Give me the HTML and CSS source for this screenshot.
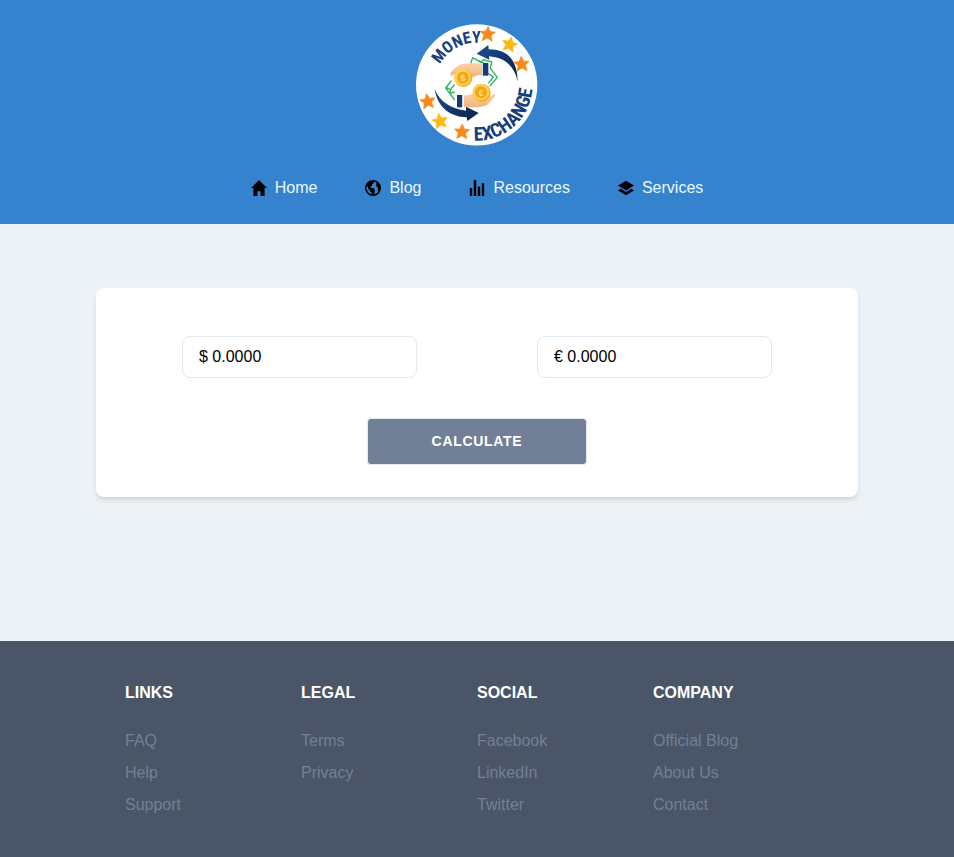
FILE: index.html
```html
<!DOCTYPE html>
<html lang="en">
<head>
<meta charset="utf-8">
<meta name="viewport" content="width=device-width, initial-scale=1">
<title>Money Exchange</title>
<link rel="stylesheet" href="styles.css">
</head>
<body>
<header class="header">
  <svg class="logo" viewBox="12 12 366 366" role="img" aria-label="Money Exchange">
    <defs>
      <linearGradient id="navy" x1="0" y1="0" x2="1" y2="1"><stop offset="0" stop-color="#1d4f97"/><stop offset="1" stop-color="#0b1f45"/></linearGradient>
      <linearGradient id="skin" x1="0" y1="0" x2="0" y2="1"><stop offset="0" stop-color="#fbd3a4"/><stop offset="1" stop-color="#f0b27e"/></linearGradient>
      <path id="arcTop" d="M68 194a126 126 0 0 1 252 0"/>
      <path id="arcBottom" d="M26 194a168 168 0 0 0 336 0a168 168 0 0 0-168-168"/>
      <path id="star" d="M0-23 7-8 23-7 11 4 15 21 0 12-15 21-11 4-23-7-7-8Z"/>
    </defs>
    <circle cx="194" cy="194.500" r="182" fill="#fff"/>
    <g class="logo-text">
      <text font-size="49"><textPath href="#arcTop" startOffset="63">MONEY</textPath></text>
      <text font-size="57"><textPath href="#arcBottom" startOffset="256">EXCHANGE</textPath></text>
    </g>
    <g class="stars" fill="#f58a1f" stroke="#f58a1f">
      <use href="#star" transform="translate(227 42) rotate(4)"/>
      <use href="#star" transform="translate(329 132) rotate(-4)"/>
      <use href="#star" transform="translate(47 244) rotate(-8)"/>
      <use href="#star" transform="translate(150 335) rotate(2)"/>
    </g>
    <g class="stars" fill="#fdb813" stroke="#fdb813">
      <use href="#star" transform="translate(293 73) rotate(14)"/>
      <use href="#star" transform="translate(84 303) rotate(-10)"/>
    </g>
    <g fill="none" stroke="#2fae66" stroke-width="4" stroke-linejoin="round">
      <path d="M176 132 182 113 207 127 214 119 239 126 235 145 256 172 234 198"/>
      <path d="M200 122 220 132M228 160 244 171 229 190M118 182 101 204 113 220 128 240M114 210 128 194M128 216 113 220 116 210 104 203"/>
    </g>
    <path fill="url(#navy)" d="M194 101 229 75 230 88C292 88 316 126 317 184C307 137 278 113 231 109L232 119Z"/>
    <path fill="url(#navy)" d="M68 207C84 247 118 266 162 272L162 260 200 279 166 303 164 292C112 290 75 259 68 207Z"/>
    <path fill="url(#skin)" d="M210 130H172C148 129 133 137 117 157C113 166 116 170 125 165L145 153 171 174C180 174 187 170 197 165L210 165Z"/>
    <path fill="#16396f" d="M213 129h16v38h-16z"/>
    <path fill="#c8dced" d="M209 129h4v38h-4z"/>
    <path fill="url(#skin)" d="M156 227 183 222 196 236 225 235 244 223C252 222 251 228 244 235L228 252C219 262 188 264 156 260Z"/>
    <path fill="#16396f" d="M135 225h15v37h-15z"/>
    <path fill="#c8dced" d="M150 225h4v37h-4z"/>
    <circle cx="154" cy="174" r="27" fill="#f7a91c"/><circle cx="152" cy="172" r="25" fill="#ffd34d"/><circle cx="153" cy="173" r="18" fill="#f3a51e"/>
    <circle cx="209" cy="218" r="27" fill="#f7a91c"/><circle cx="207" cy="216" r="25" fill="#ffd34d"/><circle cx="207" cy="217" r="18" fill="#f3a51e"/>
    <g class="coin-text"><text x="153" y="183">$</text><text x="207" y="227">€</text></g>
  </svg>
  <nav class="nav" aria-label="Main">
    <a class="nav-link" href="#"><svg class="icon" viewBox="0 0 20 20" aria-hidden="true"><path d="M8 20H3V10H0L10 0l10 10h-3v10h-5v-6H8v6z"/></svg>Home</a>
    <a class="nav-link" href="#"><svg class="icon" viewBox="0 0 20 20" aria-hidden="true"><path d="M10 20a10 10 0 1 1 0-20 10 10 0 0 1 0 20zm2-2.250a8 8 0 0 0 4-2.460V9a2 2 0 0 1-2-2V3.070a7.950 7.950 0 0 0-3-1V3a2 2 0 0 1-2 2v1a2 2 0 0 1-2 2v2h3a2 2 0 0 1 2 2v5.750zm-4 0V15a2 2 0 0 1-2-2v-1h-.5A1.500 1.500 0 0 1 4 10.500V8H2.250A8.010 8.010 0 0 0 8 17.750z"/></svg>Blog</a>
    <a class="nav-link" href="#"><svg class="icon" viewBox="0 0 20 20" aria-hidden="true"><path d="M1 10h3v10H1V10zM6 0h3v20H6V0zm5 8h3v12h-3V8zm5-4h3v16h-3V4z"/></svg>Resources</a>
    <a class="nav-link" href="#"><svg class="icon" viewBox="0 0 20 20" aria-hidden="true"><path d="M10 1l10 6-10 6L0 7l10-6zm6.670 10L20 13l-10 6-10-6 3.330-2L10 15l6.670-4z"/></svg>Services</a>
  </nav>
</header>
<main class="main">
  <form class="card">
    <div class="fields">
      <input class="field" type="text" aria-label="Dollars" value="$ 0.0000">
      <input class="field" type="text" aria-label="Euros" value="€ 0.0000">
    </div>
    <button class="button" type="button">CALCULATE</button>
  </form>
</main>
<footer class="footer">
  <div class="columns">
    <section><h2 class="title">LINKS</h2><ul class="list"><li><a href="#">FAQ</a></li><li><a href="#">Help</a></li><li><a href="#">Support</a></li></ul></section>
    <section><h2 class="title">LEGAL</h2><ul class="list"><li><a href="#">Terms</a></li><li><a href="#">Privacy</a></li></ul></section>
    <section><h2 class="title">SOCIAL</h2><ul class="list"><li><a href="#">Facebook</a></li><li><a href="#">LinkedIn</a></li><li><a href="#">Twitter</a></li></ul></section>
    <section><h2 class="title">COMPANY</h2><ul class="list"><li><a href="#">Official Blog</a></li><li><a href="#">About Us</a></li><li><a href="#">Contact</a></li></ul></section>
  </div>
</footer>
</body>
</html>
```
FILE: styles.css
```css
* { box-sizing: border-box; }

body {
  display: flex;
  flex-direction: column;
  min-height: 100vh;
  margin: 0;
  background: #edf2f7;
  font: 16px/24px "Liberation Sans", Arial, sans-serif;
}

a { color: inherit; text-decoration: none; }

.header {
  display: flex;
  flex-direction: column;
  align-items: center;
  gap: 30px;
  padding: 24px;
  background: #3583cf;
}

.logo { display: block; width: 122px; height: 122px; }

.logo-text {
  fill: #173d7a;
  font-family: "Roboto Condensed", Roboto, "Liberation Sans", sans-serif;
  font-weight: 700;
}

.stars { stroke-width: 2px; stroke-linejoin: round; }

.coin-text {
  fill: #ffe27a;
  font-size: 26px;
  font-weight: 700;
  line-height: 1;
  text-anchor: middle;
}

.nav { display: flex; flex-wrap: wrap; justify-content: center; gap: 0 48px; }

.nav-link { display: flex; align-items: center; gap: 8px; color: #ebf8ff; }

.icon { width: 16px; height: 16px; fill: #000; }

.main { flex: 1; padding: 64px 96px; }

.card {
  display: flex;
  flex-direction: column;
  align-items: center;
  gap: 40px;
  padding: 48px 86px 32px;
  border-radius: 8px;
  background: #fff;
  box-shadow: 0 4px 6px -1px rgba(0, 0, 0, 0.1), 0 2px 4px -1px rgba(0, 0, 0, 0.06);
}

.fields { display: flex; gap: 120px; width: 100%; }

.field {
  flex: 1;
  min-width: 0;
  height: 42px;
  padding: 8px 16px;
  border: 1px solid #e2e8f0;
  border-radius: 8px;
  background: #fff;
  color: #000;
  font: inherit;
}

.button {
  padding: 12px 64px;
  border: 1px solid #e2e8f0;
  border-radius: 4px;
  background: #718096;
  color: #fff;
  font: 700 14px/21px "Liberation Sans", Arial, sans-serif;
  letter-spacing: 0.05em;
}

.footer { padding: 40px 24px; background: #4a5568; }

.columns {
  display: grid;
  grid-template-columns: repeat(4, 1fr);
  max-width: 704px;
  margin: 0 auto;
}

.title { margin: 0 0 24px; color: #fff; font-size: 16px; line-height: 24px; }

.list {
  display: grid;
  gap: 8px;
  margin: 0;
  padding: 0;
  list-style: none;
  color: #718096;
}
```
